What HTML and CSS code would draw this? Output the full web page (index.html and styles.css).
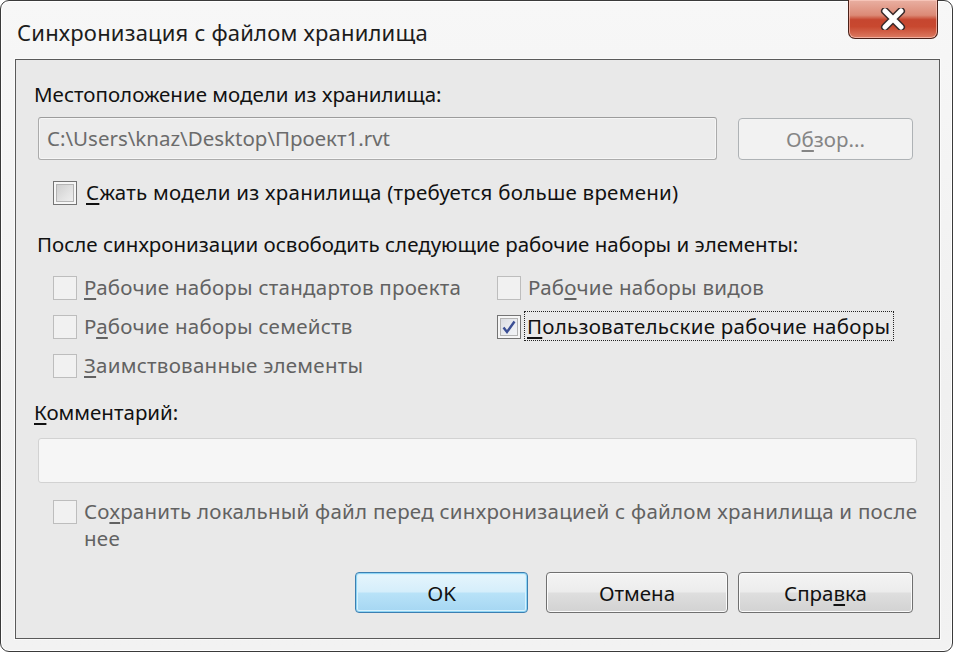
FILE: index.html
```html
<!DOCTYPE html>
<html lang="ru">
<head>
<meta charset="utf-8">
<title>Синхронизация с файлом хранилища</title>
<link rel="stylesheet" href="styles.css">
</head>
<body>
<div class="window">
  <div class="titlebar">
    <div class="title">Синхронизация с файлом хранилища</div>
    <div class="close">
      <svg width="26" height="22" viewBox="0 0 26 22">
        <path d="M5 3 L21 19 M21 3 L5 19" stroke="#3a2a2a" stroke-width="8" stroke-linecap="round"/>
        <path d="M5 3 L21 19 M21 3 L5 19" stroke="#ffffff" stroke-width="5" stroke-linecap="round"/>
      </svg>
    </div>
  </div>
  <div class="panel">
    <div class="label l1">Местоположение модели из хранилища:</div>
    <div class="pathrow">
      <div class="field path">C:\Users\knaz\Desktop\Проект1.rvt</div>
      <div class="btn disabled browse">О<u>б</u>зор...</div>
    </div>
    <div class="check compress">
      <span class="box enabled"></span>
      <span class="ctext"><u>С</u>жать модели из хранилища (требуется больше времени)</span>
    </div>
    <div class="label l2">После синхронизации освободить следующие рабочие наборы и элементы:</div>
    <div class="grid">
      <div class="check dis"><span class="box"></span><span class="ctext"><u>Р</u>абочие наборы стандартов проекта</span></div>
      <div class="check dis"><span class="box"></span><span class="ctext">Раб<u>о</u>чие наборы видов</span></div>
      <div class="check dis"><span class="box"></span><span class="ctext">Р<u>а</u>бочие наборы семейств</span></div>
      <div class="check"><span class="box enabled checked">
        <svg width="16" height="16" viewBox="0 0 16 16"><path d="M2.5 8.5 L6 13 L13.5 2.5" fill="none" stroke="#3b4f94" stroke-width="2.4"/></svg>
      </span><span class="ctext focus"><u>П</u>ользовательские рабочие наборы</span></div>
      <div class="check dis"><span class="box"></span><span class="ctext"><u>З</u>аимствованные элементы</span></div>
    </div>
    <div class="label l3"><u>К</u>омментарий:</div>
    <div class="field comment"></div>
    <div class="check dis save">
      <span class="box"></span>
      <span class="ctext">Со<u>х</u>ранить локальный файл перед синхронизацией с файлом хранилища и после нее</span>
    </div>
    <div class="buttons">
      <div class="btn default ok">OK</div>
      <div class="btn cancel">Отмена</div>
      <div class="btn help">Спра<u>в</u>ка</div>
    </div>
  </div>
</div>
</body>
</html>
```

FILE: styles.css
```css
html, body {
  margin: 0;
  padding: 0;
  background: #ffffff;
}
body {
  font-family: "Noto Sans", "Open Sans", sans-serif;
  font-size: 20.5px;
  color: #111;
}
u {
  text-decoration: underline;
  text-underline-offset: 3px;
}
.window {
  box-sizing: border-box;
  width: 953px;
  height: 652px;
  border: 1px solid #3a3a3a;
  border-radius: 9px;
  background: linear-gradient(180deg, #f7f7f7 0%, #f0f0f0 60%, #f2f2f2 100%);
  box-shadow: inset 0 0 0 1px #ffffff;
  display: flex;
  flex-direction: column;
}
.titlebar {
  height: 58px;
  display: flex;
  align-items: flex-start;
}
.title {
  margin: 16px 0 0 16px;
  font-size: 22px;
  color: #1c1c1c;
  letter-spacing: 0.2px;
}
.close {
  margin-left: auto;
  margin-right: 14px;
  margin-top: -1px;
  width: 90px;
  height: 39px;
  box-sizing: border-box;
  border: 1px solid #4a2018;
  border-top: none;
  border-radius: 0 0 7px 7px;
  background: linear-gradient(180deg, #e9b0a2 0%, #dc8a76 40%, #c6462f 52%, #c8482f 70%, #dc7b62 100%);
  box-shadow: inset 0 0 0 1px rgba(255,210,200,0.6);
  display: flex;
  align-items: center;
  justify-content: center;
}
.panel {
  box-sizing: border-box;
  margin-left: 14px;
  width: 925px;
  height: 580px;
  border: 1px solid #5a5a5a;
  box-shadow: 0 0 0 1px #fbfbfb;
  background: #e9e9e9;
  display: flex;
  flex-direction: column;
  align-items: flex-start;
}
.label {
  line-height: 24px;
  height: 24px;
  white-space: nowrap;
}
.l1 { margin: 22px 0 0 18px; }
.pathrow {
  display: flex;
  align-items: center;
  margin-top: 11px;
  margin-left: 22px;
}
.field {
  box-sizing: border-box;
  border: 1px solid #ababab;
  border-top-color: #9c9c9c;
  border-radius: 3px;
}
.path {
  width: 679px;
  height: 43px;
  line-height: 40px;
  padding-left: 8px;
  color: #6b6b6b;
  background: #ececec;
  box-shadow: inset 0 0 0 1px #f6f6f6;
}
.btn {
  box-sizing: border-box;
  height: 42px;
  display: flex;
  align-items: center;
  justify-content: center;
  border: 1px solid #707070;
  border-radius: 4px;
  background: linear-gradient(180deg, #f4f4f4 0%, #ececec 48%, #dedede 52%, #d2d2d2 100%);
  box-shadow: inset 0 0 0 1px #fbfbfb;
  color: #111;
}
.btn.disabled {
  border-color: #aeb2b5;
  background: #f2f2f2;
  color: #858585;
  box-shadow: none;
}
.browse {
  width: 175px;
  margin-left: 21px;
}
.check {
  display: flex;
  align-items: flex-start;
  line-height: 24px;
  white-space: nowrap;
}
.box {
  flex: none;
  box-sizing: border-box;
  width: 24px;
  height: 24px;
  border: 1px solid #bdbdbd;
  background: #f1f1f1;
  display: flex;
  align-items: center;
  justify-content: center;
}
.box.enabled {
  border-color: #747474;
  background: #f4f4f4;
  box-shadow: inset 0 0 0 2px #f6f6f6, inset 0 0 0 3px #b4b4b4;
  background-image: linear-gradient(135deg, #c9c9c9 0%, #e4e4e4 60%, #f2f2f2 100%);
}
.box.checked {
  background-image: linear-gradient(135deg, #d6d8dd 0%, #eceef2 60%, #f6f6f6 100%);
}
.ctext {
  margin-left: 7px;
  margin-top: -1px;
  letter-spacing: 0.25px;
}
.dis .ctext { color: #626262; }
.compress {
  margin: 21px 0 0 37px;
}
.compress .ctext { margin-left: 9px; }
.l2 { margin: 27px 0 0 21px; }
.grid {
  display: grid;
  grid-template-columns: 444px auto;
  grid-auto-rows: 24px;
  row-gap: 15px;
  margin: 20px 0 0 37px;
}
.focus {
  outline: 1px dotted #222;
  outline-offset: 2px;
  margin-left: 6px;
  padding: 0 1px 0 0;
  color: #111;
}
.l3 { margin: 22px 0 0 18px; }
.comment {
  margin: 14px 0 0 22px;
  width: 879px;
  height: 45px;
  border-color: #d2d2d2;
  background: #f6f6f6;
}
.save {
  margin: 17px 0 0 37px;
  width: 872px;
  white-space: normal;
}
.save .ctext {
  line-height: 27px;
  margin-top: -2px;
}
.buttons {
  display: flex;
  margin: auto 0 25px 339px;
}
.buttons .btn { height: 41px; }
.ok { width: 173px; }
.cancel { width: 182px; margin-left: 18px; }
.help { width: 175px; margin-left: 10px; }
.btn.default {
  border-color: #3c7fb1;
  background: linear-gradient(180deg, #e6f5fc 0%, #d5eefb 48%, #b8e2f8 52%, #a5d6f2 100%);
  box-shadow: inset 0 0 0 1px #8fd5f5, inset 0 0 0 2px #d8f1fc;
}
```
